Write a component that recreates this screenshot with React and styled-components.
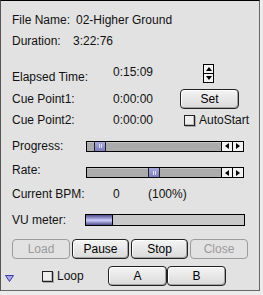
import styled, { createGlobalStyle } from 'styled-components';

const Global = createGlobalStyle`
  body {
    margin: 0;
    background: #ececec;
    font-family: "Liberation Sans", Arial, sans-serif;
  }
`;

const Window = styled.div`
  width: 260px;
  height: 291px;
  box-sizing: border-box;
  background: #e2e2e2;
  border-top: 1px solid #000;
  border-left: 1px solid #555;
  border-right: 1px solid #666;
  border-bottom: 1px solid #666;
  display: flex;
  flex-direction: column;
  font-size: 12px;
  color: #111;
`;

const Row = styled.div`
  display: flex;
  align-items: center;
  flex-shrink: 0;
  height: ${p => p.$h || 20}px;
  margin-top: ${p => p.$mt || 0}px;
  padding-left: ${p => p.$pl ?? 11}px;
  gap: ${p => p.$gap || 0}px;
`;

const Label = styled.span`
  width: ${p => p.$w}px;
  flex-shrink: 0;
  white-space: nowrap;
  padding-top: ${p => p.$pt || 0}px;
  padding-bottom: ${p => p.$pb || 0}px;
`;

const Stepper = styled.div`
  width: 11px;
  height: 19px;
  box-sizing: border-box;
  border: 1px solid #000;
  background: #f4f4f4;
  display: flex;
  flex-direction: column;
`;

const StepHalf = styled.div`
  flex: 1;
  display: flex;
  align-items: center;
  justify-content: center;
  & + & { border-top: 1px solid #000; }
  &::before {
    content: "";
    border-left: 3px solid transparent;
    border-right: 3px solid transparent;
    ${p => p.$up ? 'border-bottom: 4px solid #000;' : 'border-top: 4px solid #000;'}
  }
`;

const Btn = styled.button`
  width: ${p => p.$w}px;
  height: 20px;
  box-sizing: border-box;
  padding: 0;
  flex-shrink: 0;
  font: 12px "Liberation Sans", Arial, sans-serif;
  border: 1px solid ${p => (p.disabled ? '#9c9c9c' : '#222')};
  border-radius: 4px;
  color: ${p => (p.disabled ? '#9a9a9a' : '#000')};
  background: ${p => (p.disabled ? '#e2e2e2' : 'linear-gradient(#f4f4f4, #dadada)')};
  box-shadow: ${p => (p.disabled ? 'none' : 'inset -1px -1px 0 #a4a4a4, inset 1px 1px 0 #fff')};
`;

const Check = styled.span`
  width: 11px;
  height: 11px;
  box-sizing: border-box;
  flex-shrink: 0;
  border: 1px solid #222;
  background: #eeeeee;
  box-shadow: inset -1px -1px 0 #bbb, 1px 1px 0 #aaa;
  margin-right: 4px;
`;

const Track = styled.div`
  display: flex;
  width: 158px;
  height: 11px;
  box-sizing: border-box;
  border: 1px solid #000;
  background: #ababab;
  align-self: ${p => p.$align || 'center'};
`;

const Groove = styled.div`
  flex: 1;
  display: flex;
  box-shadow: inset 0 1px 0 #c4c4c4;
`;

const Thumb = styled.div`
  width: 12px;
  box-sizing: border-box;
  border-left: 1px solid #222;
  border-right: 1px solid #222;
  background: linear-gradient(#a8a8e0, #7c7cc0);
  display: flex;
  align-items: center;
  justify-content: center;
  gap: 1px;
`;

const Grip = styled.span`
  width: 1px;
  height: 4px;
  background: #e4e4fc;
`;

const Arrow = styled.div`
  width: 10px;
  border-left: 1px solid #000;
  background: #f2f2f2;
  display: flex;
  align-items: center;
  justify-content: center;
  &::before {
    content: "";
    border-top: 3px solid transparent;
    border-bottom: 3px solid transparent;
    ${p => p.$left ? 'border-right: 4px solid #000;' : 'border-left: 4px solid #000;'}
  }
`;

const Meter = styled.div`
  width: 160px;
  height: 12px;
  box-sizing: border-box;
  border: 1px solid #000;
  background: #c8c8c8;
  display: flex;
`;

const MeterFill = styled.div`
  border-right: 1px solid #000;
  background: linear-gradient(#50508e, #b8b8ec 45%, #c8c8f4 55%, #50508e);
`;

const Disclosure = styled.svg`
  width: 9px;
  height: 7px;
  margin-top: 4px;
  margin-right: 28px;
  flex-shrink: 0;
`;

function Slider({ pos, align }) {
  return (
    <Track $align={align}>
      <Groove>
        <Thumb style={{ marginLeft: pos }}>
          <Grip />
          <Grip />
        </Thumb>
      </Groove>
      <Arrow $left />
      <Arrow />
    </Track>
  );
}

export default function App() {
  const vuLevel = 26;
  return (
    <>
      <Global />
      <Window>
        <Row $mt={10} $h={18}>
          <Label $w={64}>File Name:</Label>
          <span>02-Higher Ground</span>
        </Row>
        <Row $mt={3} $h={18}>
          <Label $w={61}>Duration:</Label>
          <span>3:22:76</span>
        </Row>
        <Row $mt={13} $h={21}>
          <Label $w={101} $pt={7}>Elapsed Time:</Label>
          <Label $w={90} $pb={3}>0:15:09</Label>
          <Stepper>
            <StepHalf $up />
            <StepHalf />
          </Stepper>
        </Row>
        <Row $mt={5}>
          <Label $w={101}>Cue Point1:</Label>
          <Label $w={67}>0:00:00</Label>
          <Btn $w={59}>Set</Btn>
        </Row>
        <Row $mt={1}>
          <Label $w={101}>Cue Point2:</Label>
          <Label $w={71}>0:00:00</Label>
          <Check />
          <span>AutoStart</span>
        </Row>
        <Row $mt={8} $h={16}>
          <Label $w={74}>Progress:</Label>
          <Slider pos={7} />
        </Row>
        <Row $mt={8} $h={16}>
          <Label $w={74}>Rate:</Label>
          <Slider pos={61} align="flex-end" />
        </Row>
        <Row $mt={8} $h={16}>
          <Label $w={101}>Current BPM:</Label>
          <Label $w={35}>0</Label>
          <span>(100%)</span>
        </Row>
        <Row $mt={9} $h={17}>
          <Label $w={73}>VU meter:</Label>
          <Meter>
            <MeterFill style={{ width: vuLevel }} />
          </Meter>
        </Row>
        <Row $mt={11} $gap={2}>
          <Btn $w={58} disabled>Load</Btn>
          <Btn $w={57}>Pause</Btn>
          <Btn $w={57}>Stop</Btn>
          <Btn $w={58} disabled>Close</Btn>
        </Row>
        <Row $mt={7} $pl={4}>
          <Disclosure viewBox="0 0 9 7">
            <polygon points="0.5,0.5 8.5,0.5 4.5,6.5" fill="#a8a8e8" stroke="#3c3ca8" />
          </Disclosure>
          <Check />
          <Label $w={51}>Loop</Label>
          <Btn $w={59}>A</Btn>
          <Btn $w={59}>B</Btn>
        </Row>
      </Window>
    </>
  );
}
